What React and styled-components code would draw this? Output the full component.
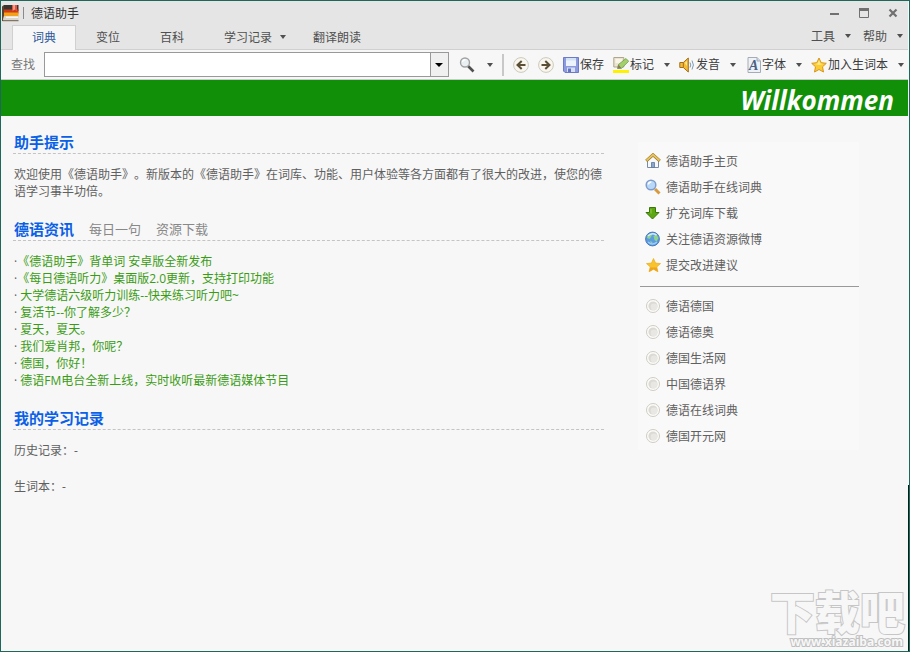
import React, { useState } from "react";

import styled, { createGlobalStyle } from "styled-components";

const GlobalStyle = createGlobalStyle`
  * {
    box-sizing: border-box;
  }
  body {
    margin: 0;
    background-color: #f7f7f7;
    font-family: "Open Sans", "Noto Sans CJK SC", sans-serif;
    font-size: 12px;
    line-height: 17px;
    color: #606060;
    text-spacing-trim: space-all;
  }
  button,
  input {
    font: inherit;
    color: inherit;
  }
  svg {
    display: block;
    flex: none;
  }
`;

const Window = styled.div`
  position: relative;
  min-height: 100vh;
  display: flex;
  flex-direction: column;
  padding-right: 1px;
  border: 1px solid #1e675a;
  background-color: #f7f7f7;
`;

/* ---------- title bar and tabs ---------- */

const TitleBar = styled.header`
  display: flex;
  align-items: center;
  height: 24px;
  padding: 0 7px 0 1px;
  background-color: #e5e5e5;
`;

const TitleDivider = styled.span`
  width: 1px;
  height: 12px;
  margin: 0 7px 0 4px;
  background-color: #8a8a8a;
`;

const Title = styled.h1`
  flex: 1;
  margin: 0;
  font-size: 12px;
  font-weight: 400;
  color: #333333;
`;

const WindowButtons = styled.div`
  display: flex;
  gap: 13px;
`;

const PlainButton = styled.button`
  display: flex;
  align-items: center;
  padding: 0;
  border: none;
  background: none;
  cursor: pointer;
`;

const TabRow = styled.div`
  display: flex;
  height: 25px;
  padding-left: 11px;
  border-bottom: 1px solid #d0d0d0;
  background-color: #e5e5e5;
`;

const Tabs = styled.nav`
  display: flex;
  flex: 1;
`;

const Tab = styled.button`
  display: flex;
  align-items: center;
  gap: 8px;
  height: 25px;
  padding: 0 ${(props) => (props.$menu ? 6 : 19)}px 2px 19px;
  border: 1px solid ${(props) => (props.$active ? "#d0d0d0" : "transparent")};
  border-bottom: none;
  background-color: ${(props) => (props.$active ? "#f7f7f7" : "transparent")};
  color: ${(props) => (props.$active ? "#2b579a" : "#505050")};
  cursor: pointer;
`;

const Menus = styled.div`
  display: flex;
  gap: 12px;
  padding: 0 5px 2px 0;
`;

const MenuButton = styled(PlainButton)`
  gap: 10px;
  color: #505050;
`;

/* ---------- toolbar ---------- */

const Toolbar = styled.div`
  display: flex;
  align-items: center;
  height: 30px;
  padding: 0 4px 0 10px;
  border-bottom: 1px solid #c8ccc8;
  background-color: #f7f7f7;
  color: #3c3c3c;
`;

const SearchLabel = styled.label`
  margin-right: 9px;
  color: #777777;
`;

const Combo = styled.div`
  display: flex;
  flex: 1;
  min-width: 80px;
  height: 25px;
  border: 1px solid #999999;
  background-color: white;
`;

const ComboInput = styled.input`
  flex: 1;
  min-width: 0;
  padding: 0 4px;
  border: none;
  outline: none;
  background: none;
`;

const ComboButton = styled(PlainButton)`
  justify-content: center;
  width: 18px;
  border-left: 1px solid #999999;
  background-color: #f0f0f0;
`;

const Tools = styled.div`
  display: flex;
  align-items: center;
  gap: 9px;
  padding-left: 10px;
`;

const ToolGroup = styled.div`
  display: flex;
  align-items: center;
  gap: ${(props) => props.$gap || 10}px;
`;

const ToolButton = styled(PlainButton)`
  gap: 1px;
`;

const Separator = styled.span`
  width: 2px;
  height: 22px;
  background-color: #c8c8c8;
`;

/* ---------- page ---------- */

const Banner = styled.div`
  height: 36px;
  padding-right: 14px;
  background-color: #118f08;
  color: white;
  font-size: 26px;
  font-style: italic;
  font-weight: 700;
  line-height: 40px;
  text-align: right;
`;

const Page = styled.main`
  display: flex;
  gap: 34px;
  padding: 15px 49px 80px 12px;
`;

const Column = styled.div`
  flex: 1;
  min-width: 0;
`;

const Section = styled.section`
  margin-bottom: 18px;
`;

const SectionHead = styled.div`
  display: flex;
  align-items: center;
  gap: 15px;
  height: 23px;
  padding-left: 1px;
  margin-bottom: 12px;
  border-bottom: 1px dashed #c4c4c4;
`;

const Heading = styled.h2`
  margin: 0;
  font-size: 15px;
  font-weight: 700;
  color: #0a60e6;
`;

const HeadLink = styled.a`
  font-size: 13px;
  color: #888888;
  text-decoration: none;
`;

const Text = styled.p`
  margin: 0 0 19px;
  padding-left: 1px;

  &:last-child {
    margin-bottom: 0;
  }
`;

const NewsList = styled.ul`
  margin: 0;
  padding: 0 0 0 1px;
  list-style: none;
`;

const NewsLink = styled.a`
  color: #3a9c14;
  text-decoration: none;

  &:hover {
    text-decoration: underline;
  }
`;

const Side = styled.aside`
  width: 221px;
  margin-top: 11px;
  padding: 6px 0 1px 2px;
  align-self: flex-start;
  background-color: #f9f9f9;
`;

const SideList = styled.ul`
  margin: 0;
  padding: 0 0 0 5px;
  list-style: none;
`;

const SideItem = styled.li`
  height: 26px;
`;

const SideLink = styled.a`
  display: flex;
  align-items: center;
  gap: 5px;
  height: 26px;
  color: #606060;
  text-decoration: none;
`;

const SideRule = styled.hr`
  height: 1px;
  margin: 8px 0 6px;
  border: none;
  background-color: #999999;
`;

/* dark strip along the lower right edge of the window */
const EdgeShadow = styled.div`
  position: absolute;
  right: 0;
  bottom: 0;
  width: 1px;
  height: 166px;
  background-color: #04201c;
`;

const Watermark = styled.div`
  position: absolute;
  right: 4px;
  bottom: 2px;
  display: flex;
  flex-direction: column;
  align-items: flex-end;
  font-weight: 900;
`;

const WatermarkName = styled.span`
  font-size: 45px;
  line-height: 45px;
  color: #f7f7f7;
  -webkit-text-stroke: 2px #c6c6c6;
  paint-order: stroke fill;
`;

const WatermarkUrl = styled.span`
  padding-right: 2px;
  font-size: 12px;
  font-weight: 700;
  line-height: 14px;
  color: #f7f7f7;
  -webkit-text-stroke: 2px #c0c0c0;
  paint-order: stroke fill;
`;

/* ---------- icons ---------- */

const Arrow = ({ color = "#505050", size = 6 }) => (
  <svg width={size} height="4" viewBox="0 0 6 4" preserveAspectRatio="none">
    <path d="M0 0h6L3 4z" fill={color} />
  </svg>
);

const AppIcon = () => (
  <svg width="17" height="17" viewBox="0 0 17 17">
    <path d="M2 0h14.500v6H.500z" fill="#3a3431" />
    <path d="M1.500 4.500h15v4H.800z" fill="#cf3a16" />
    <path d="M.800 7.500h15.700v4H.500z" fill="#f2a21a" />
    <path d="M0 1.500 2 0v11L1 16H0z" fill="#57422f" />
    <path d="M2 11h14.500v4.500H1z" fill="#d9d5cb" />
    <path d="M4 11.500h12v1.500H4z" fill="#f7f5ee" />
    <path d="M.500 15.200h16v1H.500z" fill="#6e5a42" />
    <path d="M10 0h5v6.500L12.500 4.500 10 6.500z" fill="#e2553f" />
    <path d="M11.300 0h1.500v4.500l-1.500 1z" fill="#f7b5a4" />
  </svg>
);

const MinimizeIcon = () => (
  <svg width="16" height="16" viewBox="0 0 16 16">
    <path d="M3 8h9v2H3z" fill="#707070" />
  </svg>
);

const MaximizeIcon = () => (
  <svg width="16" height="16" viewBox="0 0 16 16">
    <path d="M3.500 4h9v8.500h-9z" fill="none" stroke="#707070" />
    <path d="M3 3h10v3H3z" fill="#707070" />
  </svg>
);

const CloseIcon = () => (
  <svg width="16" height="16" viewBox="0 0 16 16">
    <path d="m4.500 4.500 7 7m0-7-7 7" stroke="#707070" strokeWidth="2.200" />
  </svg>
);

const FindIcon = () => (
  <svg width="16" height="16" viewBox="0 0 16 16">
    <path d="m9 9 5.500 5.500" stroke="#505050" strokeWidth="2.600" />
    <circle cx="6" cy="5.500" r="4.500" fill="#e9f0f4" stroke="#a2a2a2" strokeWidth="1.400" />
    <path d="M3.500 5A2.600 2.600 0 0 1 6.500 2.800" fill="none" stroke="white" strokeWidth="1.300" />
  </svg>
);

const CircleArrowIcon = ({ back }) => (
  <svg width="16" height="16" viewBox="0 0 16 16">
    <circle cx="8" cy="8" r="7.400" fill="#f8f6ee" stroke="#cdc9bb" />
    <path
      d={back ? "M12.500 8H5m3.700-4L4.500 8l4.200 4" : "M3.500 8H11M7.300 4l4.200 4-4.200 4"}
      fill="none"
      stroke="#5c4f36"
      strokeWidth="2"
    />
  </svg>
);

const SaveIcon = () => (
  <svg width="16" height="16" viewBox="0 0 16 16">
    <path d="M.500.500h15v15H2l-1.500-1.500z" fill="#8c9be0" stroke="#6b7bc8" />
    <path d="M3 1h10v8H3z" fill="#edf3fc" />
    <path d="M3 1h10v2.500H3z" fill="#d3e3f7" />
    <path d="M4 10.500h8V15H4z" fill="#d9dff3" />
    <path d="M5 11.500h3V15H5z" fill="#6273c4" />
  </svg>
);

const MarkIcon = () => (
  <svg width="16" height="18" viewBox="0 0 16 18">
    <path d="M.800 1.500h10v9.500h-10z" fill="#ebe4d0" stroke="#b0a68c" />
    <path d="M2.500 3h6.500v4H2.500z" fill="#f8f4e8" />
    <path d="m4.500 12.500 1-4 7.500-6 2.700 2.800-7.200 7z" fill="#a4d06c" stroke="#6f9d46" strokeWidth=".8" />
    <path d="m4.500 12.500 1-4 3 3.700z" fill="#8a7a50" />
    <path d="M0 14h16v3H0z" fill="#fff200" />
  </svg>
);

const SoundIcon = () => (
  <svg width="16" height="16" viewBox="0 0 16 16">
    <path d="M.8 5.500h3.500l5-4.500v14l-5-4.500H.8z" fill="#f6bb35" stroke="#a36d1a" />
    <path d="M4.300 5.500v5" stroke="#a36d1a" />
    <path d="M5.800 6 8 4v5z" fill="#fde59a" />
    <path d="M11 5.500q1.600 2.500 0 5M13 3.500q2.800 4.500 0 9" fill="none" stroke="#7b9ab4" />
  </svg>
);

const FontIcon = () => (
  <svg width="16" height="16" viewBox="0 0 16 16">
    <path d="M3 .500h9l3.500 3.500v11.500H3z" fill="#eef2f7" stroke="#a4acb6" />
    <path d="M12 .500v3.500h3.500" fill="#cfd8e2" stroke="#a4acb6" />
    <text
      x="4"
      y="13"
      fill="#4a6182"
      fontFamily="Liberation Serif, serif"
      fontSize="14"
      fontStyle="italic"
      fontWeight="700"
    >
      A
    </text>
  </svg>
);

const StarIcon = () => (
  <svg width="16" height="16" viewBox="0 0 16 16">
    <path
      d="m8 1 2.200 4.700 5.100.6-3.800 3.500 1 5.200L8 12.500 3.500 15l1-5.200L.7 6.300l5.100-.6z"
      fill="#fbcb34"
      stroke="#d8951c"
      strokeLinejoin="round"
    />
    <path d="m8 3 1.400 3.500 3 .5L8 8 4 7l2.500-.5z" fill="#ffe98a" />
  </svg>
);

const FeedbackIcon = () => (
  <svg width="16" height="16" viewBox="0 0 16 16">
    <path
      d="m8.500 1.500 2 4.600 5 .5-3.800 3.300 1.200 4.900-4.400-2.600-4.400 2.600 1.200-4.900-3.800-3.300 5-.5z"
      fill="#f8c32c"
      stroke="#eeb02a"
      strokeWidth=".8"
      strokeLinejoin="round"
    />
    <path d="m8.500 12.200-4.400 2.600 1-4.200 6.700-.2 1.100 4.400z" fill="#eda61c" />
  </svg>
);

const HomeIcon = () => (
  <svg width="16" height="16" viewBox="0 0 16 16">
    <path d="M2.500 7.500 8 3l5.500 4.500v7h-11z" fill="#f6f8fb" stroke="#7b8ba5" />
    <path d="M6.500 9.500h3v5h-3z" fill="#8ba7cf" stroke="#5e7698" strokeWidth=".8" />
    <path d="m1.200 7.800 6.800-6 6.800 6" fill="none" stroke="#9c7621" strokeWidth="3" />
    <path d="m1.500 7.500 6.500-5.700 6.500 5.700" fill="none" stroke="#e6c360" strokeWidth="1.800" />
  </svg>
);

const OnlineIcon = () => (
  <svg width="16" height="16" viewBox="0 0 16 16">
    <path d="m10 10 4.500 4.500" stroke="#d89a3c" strokeWidth="3" />
    <circle cx="6" cy="6" r="4.800" fill="#b9d8f7" stroke="#7f9dcb" strokeWidth="1.500" />
    <path d="M3.300 5.500a3 3 0 0 1 3-2.600" fill="none" stroke="white" strokeWidth="1.500" />
  </svg>
);

const DownloadIcon = () => (
  <svg width="16" height="16" viewBox="0 0 16 16">
    <path
      d="M4.500 2.500h6v5H14L7.500 14 1 7.500h3.500z"
      fill="#5da713"
      stroke="#3a7608"
      strokeLinejoin="round"
    />
    <path d="M6 4v4.500" stroke="#94cf4e" />
  </svg>
);

const GlobeIcon = () => (
  <svg width="16" height="16" viewBox="0 0 16 16">
    <circle cx="7.500" cy="8" r="6.900" fill="#5b9be2" stroke="#4a78ba" />
    <path d="M2.500 4.500Q5 2 7.500 3L6 6 4.500 8 2 7zM8.500 5l3-1.500L13.500 7l-2 3.500L9.500 9z" fill="#8fd38a" />
    <path d="m5 10 2.500 1-1 2.500z" fill="#8fd38a" />
    <path d="M3 5Q6.500 1 11.500 4" fill="none" stroke="#d4ebff" strokeWidth="1.500" />
    <path d="M3 11Q7.500 15 12 11" fill="none" stroke="#9accf6" strokeWidth="1.200" />
  </svg>
);

const DotIcon = () => (
  <svg width="16" height="16" viewBox="0 0 16 16">
    <circle cx="8" cy="8" r="6.500" fill="#fcfcfa" stroke="#cfccc4" />
    <circle cx="8" cy="8" r="4.600" fill="#dbdad5" />
    <circle cx="9" cy="9" r="3.400" fill="#e8e7e3" />
  </svg>
);

/* ---------- data ---------- */

const TABS = [
  { name: "词典" },
  { name: "变位" },
  { name: "百科" },
  { name: "学习记录", menu: true },
  { name: "翻译朗读" },
];

const NEWS = [
  "《德语助手》背单词 安卓版全新发布",
  "《每日德语听力》桌面版2.0更新，支持打印功能",
  " 大学德语六级听力训练--快来练习听力吧~",
  " 复活节--你了解多少？",
  " 夏天，夏天。",
  " 我们爱肖邦，你呢？",
  " 德国，你好！",
  " 德语FM电台全新上线，实时收听最新德语媒体节目",
];

const MAIN_LINKS = [
  { name: "德语助手主页", Icon: HomeIcon },
  { name: "德语助手在线词典", Icon: OnlineIcon },
  { name: "扩充词库下载", Icon: DownloadIcon },
  { name: "关注德语资源微博", Icon: GlobeIcon },
  { name: "提交改进建议", Icon: FeedbackIcon },
];

const SITE_LINKS = [
  "德语德国",
  "德语德奥",
  "德国生活网",
  "中国德语界",
  "德语在线词典",
  "德国开元网",
];

const App = () => {
  const [activeTab, setActiveTab] = useState("词典");
  const [word, setWord] = useState("");

  return (
    <>
      <GlobalStyle />
      <Window>
        <TitleBar>
          <AppIcon />
          <TitleDivider />
          <Title>德语助手</Title>
          <WindowButtons>
            <PlainButton aria-label="最小化">
              <MinimizeIcon />
            </PlainButton>
            <PlainButton aria-label="最大化">
              <MaximizeIcon />
            </PlainButton>
            <PlainButton aria-label="关闭">
              <CloseIcon />
            </PlainButton>
          </WindowButtons>
        </TitleBar>
        <TabRow>
          <Tabs>
            {TABS.map((tab) => (
              <Tab
                key={tab.name}
                $active={tab.name === activeTab}
                $menu={tab.menu}
                onClick={() => setActiveTab(tab.name)}
              >
                {tab.name}
                {tab.menu && <Arrow />}
              </Tab>
            ))}
          </Tabs>
          <Menus>
            <MenuButton>
              工具
              <Arrow />
            </MenuButton>
            <MenuButton>
              帮助
              <Arrow />
            </MenuButton>
          </Menus>
        </TabRow>
        <Toolbar>
          <SearchLabel htmlFor="word">查找</SearchLabel>
          <Combo>
            <ComboInput
              id="word"
              type="text"
              value={word}
              onChange={(e) => setWord(e.target.value)}
            />
            <ComboButton aria-label="历史">
              <Arrow color="black" size={8} />
            </ComboButton>
          </Combo>
          <Tools>
            <ToolGroup $gap={12}>
              <PlainButton aria-label="搜索">
                <FindIcon />
              </PlainButton>
              <Arrow />
            </ToolGroup>
            <Separator />
            <PlainButton aria-label="后退">
              <CircleArrowIcon back />
            </PlainButton>
            <PlainButton aria-label="前进">
              <CircleArrowIcon />
            </PlainButton>
            <ToolButton>
              <SaveIcon />
              保存
            </ToolButton>
            <ToolGroup>
              <ToolButton>
                <MarkIcon />
                标记
              </ToolButton>
              <Arrow />
            </ToolGroup>
            <ToolGroup>
              <ToolButton>
                <SoundIcon />
                发音
              </ToolButton>
              <Arrow />
            </ToolGroup>
            <ToolGroup>
              <ToolButton>
                <FontIcon />
                字体
              </ToolButton>
              <Arrow />
            </ToolGroup>
            <ToolGroup>
              <ToolButton>
                <StarIcon />
                加入生词本
              </ToolButton>
              <Arrow />
            </ToolGroup>
          </Tools>
        </Toolbar>
        <Banner>Willkommen</Banner>
        <Page>
          <Column>
            <Section>
              <SectionHead>
                <Heading>助手提示</Heading>
              </SectionHead>
              <Text>
                欢迎使用《德语助手》。新版本的《德语助手》在词库、功能、用户体验等各方面都有了很大的改进，使您的德语学习事半功倍。
              </Text>
            </Section>
            <Section>
              <SectionHead>
                <Heading>德语资讯</Heading>
                <HeadLink href="#daily">每日一句</HeadLink>
                <HeadLink href="#download">资源下载</HeadLink>
              </SectionHead>
              <NewsList>
                {NEWS.map((item) => (
                  <li key={item}>
                    ·<NewsLink href="#news">{item}</NewsLink>
                  </li>
                ))}
              </NewsList>
            </Section>
            <Section>
              <SectionHead>
                <Heading>我的学习记录</Heading>
              </SectionHead>
              <Text>历史记录：-</Text>
              <Text>生词本：-</Text>
            </Section>
          </Column>
          <Side>
            <SideList>
              {MAIN_LINKS.map(({ name, Icon }) => (
                <SideItem key={name}>
                  <SideLink href="#link">
                    <Icon />
                    {name}
                  </SideLink>
                </SideItem>
              ))}
            </SideList>
            <SideRule />
            <SideList>
              {SITE_LINKS.map((name) => (
                <SideItem key={name}>
                  <SideLink href="#site">
                    <DotIcon />
                    {name}
                  </SideLink>
                </SideItem>
              ))}
            </SideList>
          </Side>
        </Page>
        <EdgeShadow />
        <Watermark>
          <WatermarkName>下载吧</WatermarkName>
          <WatermarkUrl>www.xiazaiba.com</WatermarkUrl>
        </Watermark>
      </Window>
    </>
  );
};

export default App;
